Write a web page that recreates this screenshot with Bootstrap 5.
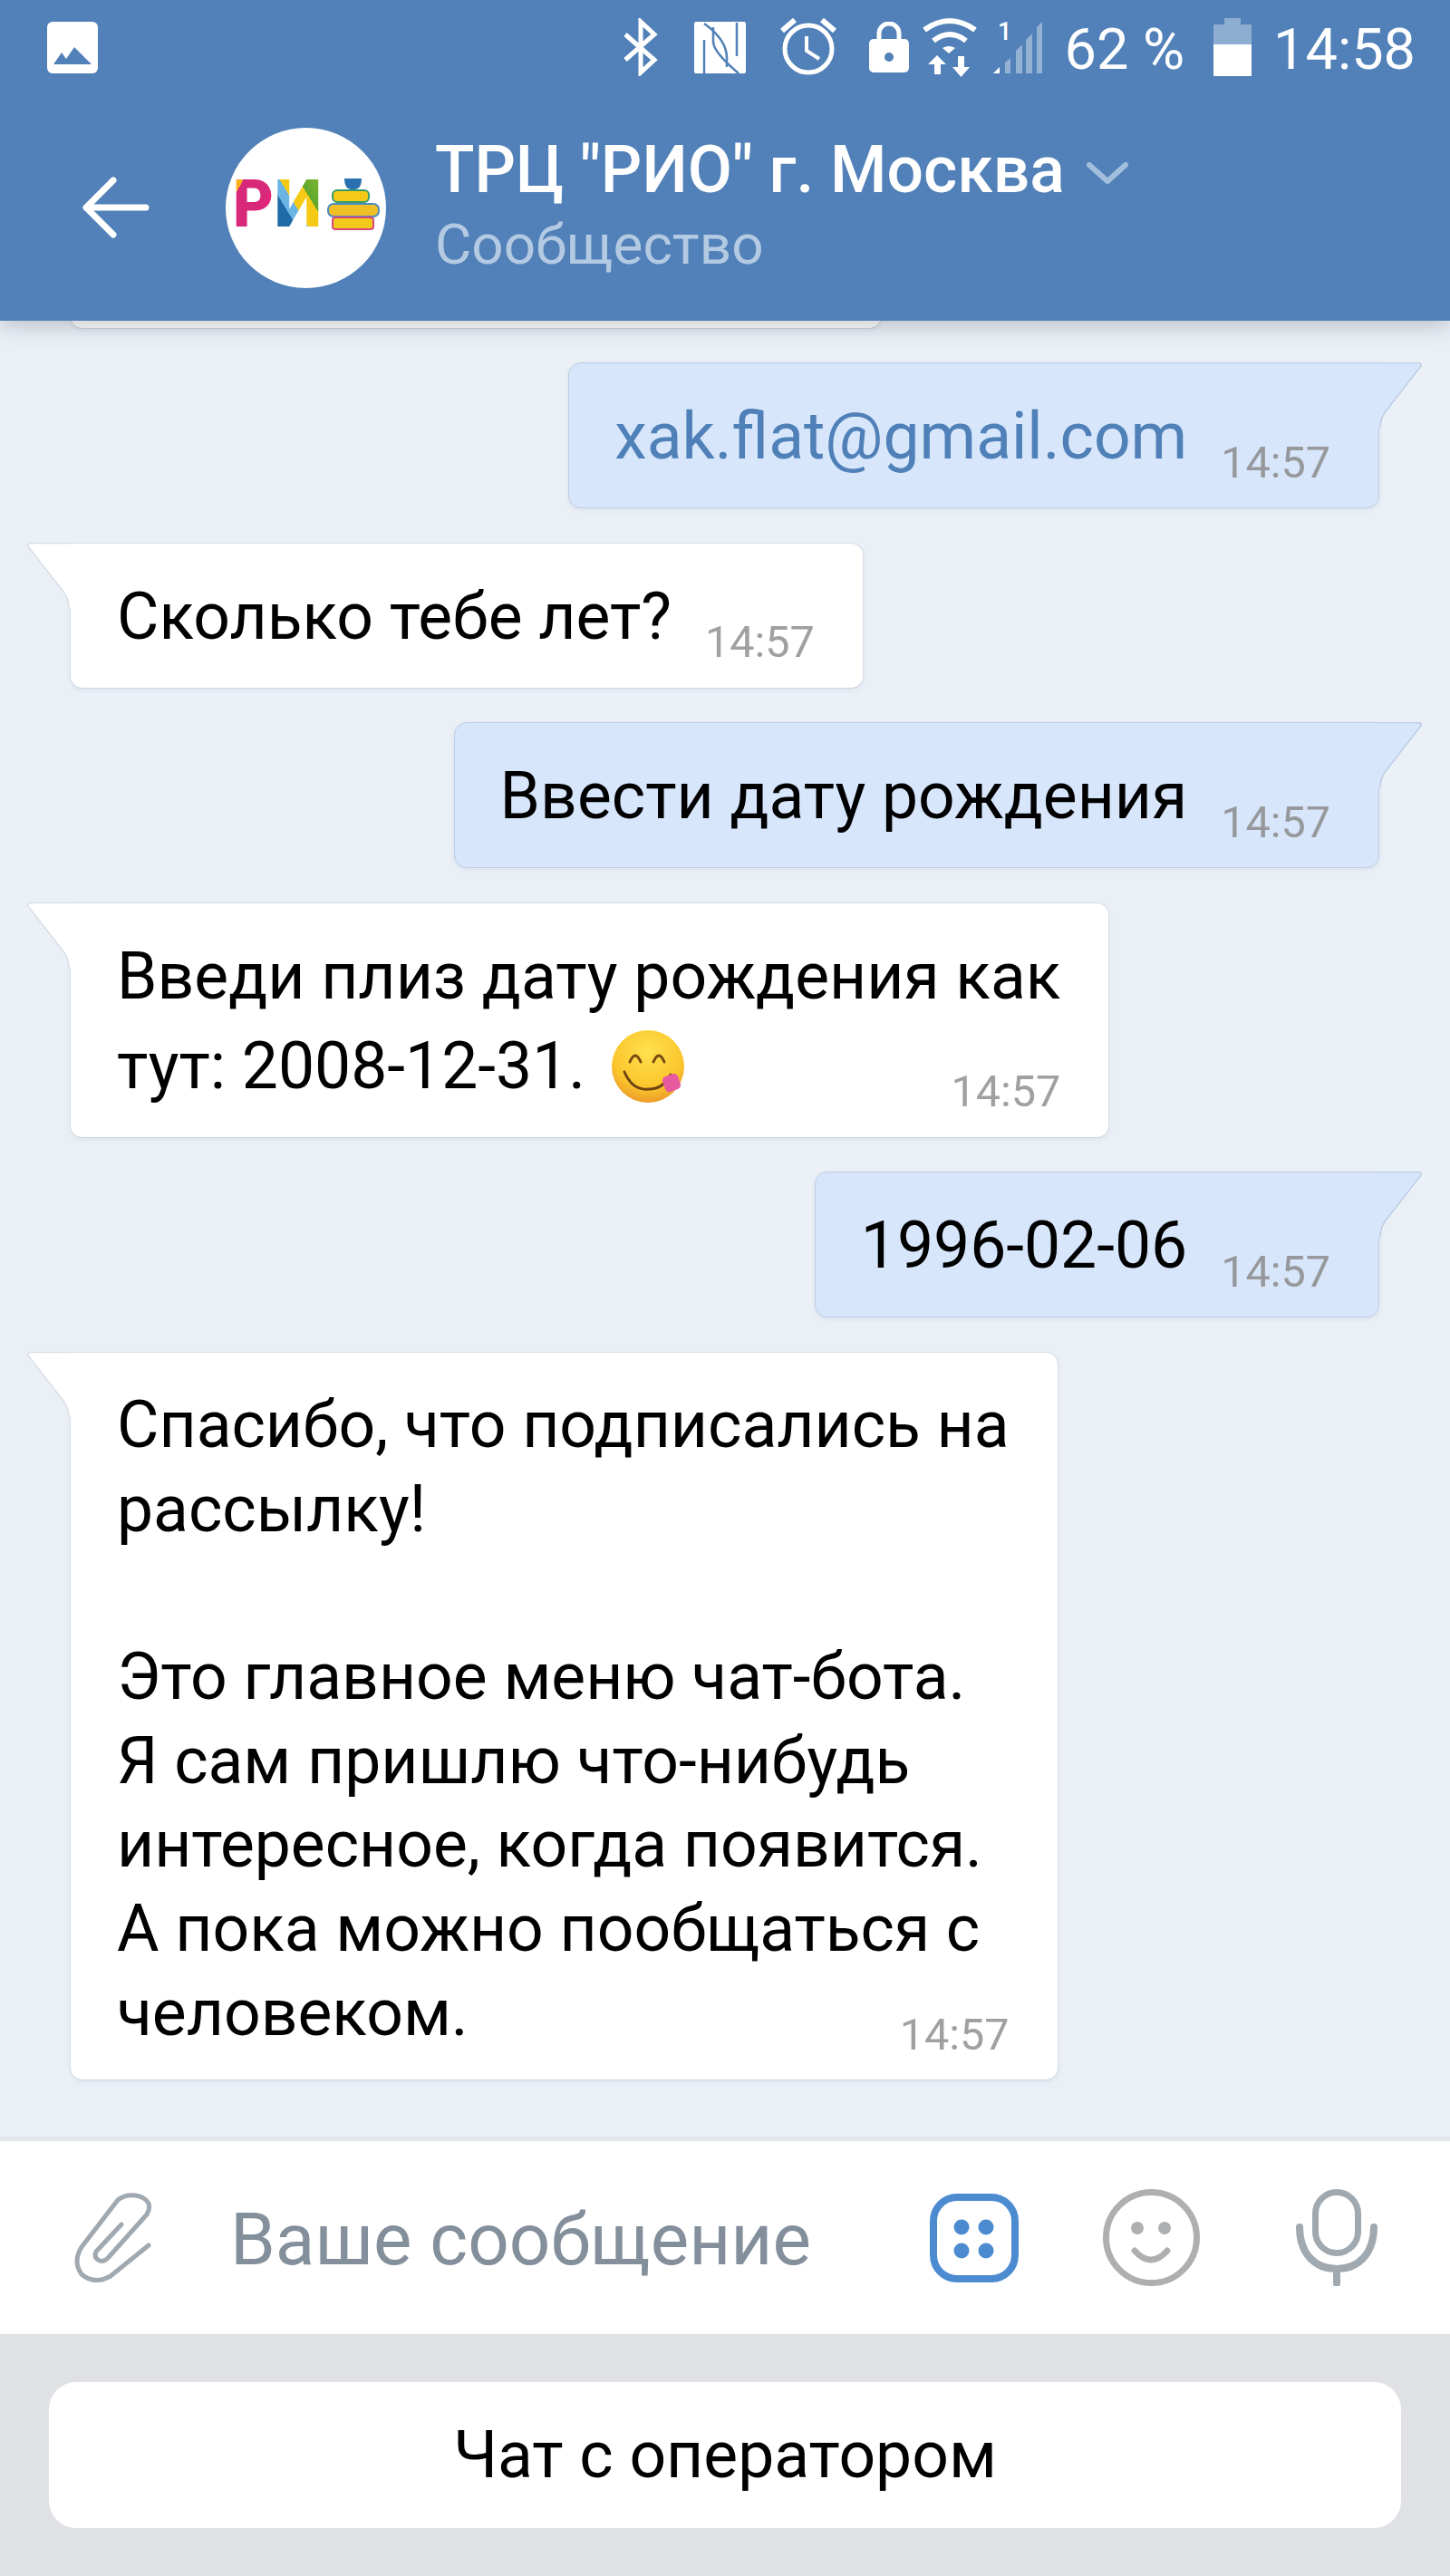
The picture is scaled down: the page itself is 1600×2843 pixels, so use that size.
<!DOCTYPE html>
<html lang="ru">
<head>
<meta charset="UTF-8">
<meta name="viewport" content="width=device-width, initial-scale=1.0">
<title>ТРЦ "РИО" г. Москва</title>
<link href="https://cdn.jsdelivr.net/npm/bootstrap@5.3.0/dist/css/bootstrap.min.css" rel="stylesheet">
<style>
  body {
    font-family: Roboto, "Liberation Sans", sans-serif;
    background: #ebf0f7;
    color: #000;
  }
  .screen { height: 100vh; }

  /* header */
  .vk-head {
    background: #5181b8;
    color: #fff;
    position: relative;
    z-index: 2;
    box-shadow: 0 4px 24px rgba(40, 50, 60, .28);
  }
  .status-row { height: 104px; padding: 0 38px 0 52px; font-size: 63px; line-height: 1; }
  .st-text { padding-top: 4px; }
  .st-bt { margin-right: 39px; }
  .st-nfc { margin-right: 38px; }
  .st-alarm { margin-right: 36px; }
  .st-lock { margin-right: 14px; }
  .st-wifi { margin-right: 16px; }
  .st-signal { margin-right: 24px; }
  .st-pct { margin-right: 32px; }
  .st-batt { margin-right: 24px; }
  .nav-row { height: 250px; padding-left: 90px; }
  .head-avatar { margin: 0 54px 0 84px; }
  .head-title { font-size: 71.4px; font-weight: 500; line-height: 80px; }
  .head-sub { font-size: 62px; line-height: 80px; padding-top: 2px; color: #b4cae3; }
  .head-chevron { margin-left: 24px; margin-top: 6px; }

  /* chat */
  .chat-area { padding: 0 78px 62px 77px; gap: 37.5px; }
  .bubble {
    position: relative;
    flex: none;
    font-size: 71.4px;
    line-height: 93px;
    padding: 34px 53px 32px 50px;
    border: 1px solid;
    border-radius: 14px;
    white-space: nowrap;
  }
  .bubble-in {
    background: #fff;
    border-color: #d9dfe6;
    border-bottom-color: #cfd6de;
    border-top-left-radius: 0;
    align-self: flex-start;
    padding-left: 51px;
    box-shadow: 0 2px 5px rgba(80, 100, 130, .08);
  }
  .bubble-out {
    background: #d7e6fb;
    border-color: #bccde3;
    border-top-right-radius: 0;
    align-self: flex-end;
    box-shadow: 0 2px 5px rgba(80, 100, 130, .1);
  }
  .bubble-cut { width: 896px; height: 120px; }
  .bubble-last { line-height: 92.7px; padding-bottom: 26.400px; }
  .tail { position: absolute; top: -1px; }
  .bubble-out .tail { left: 100%; fill: #d7e6fb; color: #bccde3; }
  .bubble-in .tail { right: 100%; fill: #fff; color: #d9dfe6; transform: scaleX(-1); }
  .msg-time {
    font-size: 48.5px;
    line-height: 48px;
    color: #a0a0a2;
    margin-left: 37px;
    margin-bottom: -6.5px;
  }
  .bubble-out .msg-time { color: #96989b; }
  .msg-time-under { display: block; text-align: right; margin-top: -41.5px; }
  .bubble-last .msg-time-under { margin-top: -47.100px; margin-bottom: -.9px; }
  .msg-link { color: #4f80b8; text-decoration: none; }
  .emoji { vertical-align: -17px; margin-left: 10px; margin-top: 12px; }

  /* input */
  .input-bar {
    height: 218px;
    background: #fff;
    border-top: 5px solid #e2e5e9;
    padding-left: 82px;
  }
  .msg-input {
    width: 650px;
    margin-left: 84px;
    margin-right: 122px;
    padding: 4px 0 0;
    border: 0;
    background: transparent;
    box-shadow: none;
    font-size: 80px;
    line-height: 90px;
    flex: none;
  }
  .msg-input::placeholder { color: #848f9c; opacity: 1; }
  .ic-smile { margin-left: 93px; }
  .ic-mic { margin-left: 106px; }

  /* keyboard */
  .bot-keys { height: 267px; background: #dfe1e5; padding: 53px 54px; }
  .bot-btn {
    background: #fff;
    border: 0;
    border-radius: 30px;
    font-size: 71.4px;
    line-height: 1;
    color: #000;
  }
</style>
</head>
<body>
<svg width="0" height="0" class="position-absolute">
  <symbol id="tail-shape" viewBox="0 0 48 72">
    <path d="M0 0H44Q48 0 47 4L8 54Q2 62 2 72H0Z" stroke="none"/>
    <path d="M0 .5H44Q48 .5 47 4L8 54Q2 62 2 72" fill="none" stroke="currentColor" stroke-width="1.5"/>
  </symbol>
</svg>

<div class="screen d-flex flex-column overflow-hidden">
  <!-- header -->
  <header class="vk-head flex-shrink-0">
    <div class="status-row d-flex align-items-center">
      <svg width="56" height="57" viewBox="0 0 56 57">
        <rect width="56" height="57" rx="6" fill="#fff"/>
        <path d="M7 47 16 34l5 7 9-13 19 19Z" fill="#5181b8"/>
      </svg>
      <span class="ms-auto"></span>
      <svg class="st-bt" width="40" height="64" viewBox="0 0 40 64">
        <path d="M3 18 35 46 20 60V4L35 18 3 46" fill="none" stroke="#fff" stroke-width="5"/>
      </svg>
      <svg class="st-nfc" width="57" height="57" viewBox="0 0 57 57">
        <rect width="57" height="57" rx="2" fill="#fff"/>
        <path d="M11 20V57M11 2C25 12 36 25 36 40V50M21 6V22C21 32 36 46 49 57M47 1V38" fill="none" stroke="#5181b8" stroke-width="2.500"/>
      </svg>
      <svg class="st-alarm" width="62" height="64" viewBox="0 0 62 64">
        <circle cx="31" cy="34" r="26" fill="none" stroke="#fff" stroke-width="5"/>
        <path d="M2 14 16 2M46 2 60 14" stroke="#fff" stroke-width="6"/>
        <path d="M29 20V36L43 45" fill="none" stroke="#fff" stroke-width="4"/>
      </svg>
      <svg class="st-lock" width="44" height="56" viewBox="0 0 44 56">
        <rect y="19" width="44" height="37" rx="5" fill="#fff"/>
        <path d="M11 20V13a11 11 0 0 1 22 0V20" fill="none" stroke="#fff" stroke-width="5"/>
        <circle cx="22" cy="39" r="5" fill="#5181b8"/>
      </svg>
      <svg class="st-wifi" width="62" height="66" viewBox="0 0 62 66" fill="#fff">
        <path d="M3 14Q31-6 59 14M13 26Q31 12 49 26" fill="none" stroke="#fff" stroke-width="6"/>
        <path d="M23 34Q30 30 37 34L30 40Z"/>
        <path d="M17 42 27 52H21V63H14V52H7Z"/>
        <path d="M40 43H47V55H53L43.500 66 34 55H40Z"/>
      </svg>
      <svg class="st-signal" width="56" height="70" viewBox="0 -6 56 70">
        <text x="6" y="21" font-size="27" font-weight="500" fill="#fff">1</text>
        <path d="M1 58 8 51V58Z" fill="#fff"/>
        <path d="M14 58V46L20 41V58ZM26 58V33L33 26V58ZM37 58V21L44 14V58ZM49 58V7L55 1V58Z" fill="#fff" fill-opacity=".38"/>
      </svg>
      <span class="st-pct st-text">62 %</span>
      <svg class="st-batt" width="42" height="64" viewBox="0 0 42 64">
        <path d="M12 0H30V7H42V29H0V7H12Z" fill="#fff" fill-opacity=".35"/>
        <rect y="29" width="42" height="35" fill="#fff"/>
      </svg>
      <span class="st-text">14:58</span>
    </div>
    <div class="nav-row d-flex align-items-center">
      <svg width="75" height="68" viewBox="0 0 75 68" class="flex-shrink-0">
        <path d="M71 34H5M35 4 5 34 35 64" fill="none" stroke="#fff" stroke-width="7" stroke-linecap="round" stroke-linejoin="round"/>
      </svg>
      <svg class="head-avatar flex-shrink-0" width="177" height="177" viewBox="0 0 177 177">
        <defs>
          <linearGradient id="letter-r" x1="0" y1="0" x2="1" y2="1">
            <stop offset=".22" stop-color="#f6b01e"/><stop offset=".22" stop-color="#d8287a"/>
            <stop offset=".6" stop-color="#d8287a"/><stop offset=".6" stop-color="#e0267c"/>
          </linearGradient>
          <linearGradient id="letter-i" x1="0" y1="1" x2="1" y2="0">
            <stop offset=".22" stop-color="#1f6aa8"/><stop offset=".34" stop-color="#1f6aa8"/>
            <stop offset=".34" stop-color="#6bb5e5"/><stop offset=".46" stop-color="#6bb5e5"/>
            <stop offset=".46" stop-color="#f6c915"/><stop offset=".66" stop-color="#f6c915"/>
            <stop offset=".66" stop-color="#5fa82e"/><stop offset="1" stop-color="#8fbb2c"/>
          </linearGradient>
        </defs>
        <circle cx="88.500" cy="88.500" r="88.500" fill="#fff"/>
        <text x="8" y="109" font-size="73" font-weight="900" fill="url(#letter-r)" textLength="45" lengthAdjust="spacingAndGlyphs">Р</text>
        <text x="54" y="109" font-size="73" font-weight="900" fill="url(#letter-i)" textLength="52" lengthAdjust="spacingAndGlyphs">И</text>
        <path d="M131 56H150Q150 67 143 68H138Q131 67 131 56Z" fill="#2a6fae"/>
        <rect x="118" y="69" width="40" height="13" rx="5" fill="#f5c918" stroke="#3a9a6a" stroke-width="2"/>
        <rect x="113" y="84" width="56" height="14" rx="6" fill="#f0be25" stroke="#4a8cc4" stroke-width="2"/>
        <rect x="118" y="99" width="45" height="13" rx="3" fill="#f5c918" stroke="#d8467e" stroke-width="2"/>
      </svg>
      <div>
        <div class="head-title d-flex align-items-center">ТРЦ "РИО" г. Москва
          <svg class="head-chevron" width="46" height="24" viewBox="0 0 46 24">
            <path d="M3 3 23 21 43 3" fill="none" stroke="#a3bfdd" stroke-width="6" stroke-linecap="round" stroke-linejoin="round"/>
          </svg>
        </div>
        <div class="head-sub">Сообщество</div>
      </div>
    </div>
  </header>

  <!-- messages -->
  <main class="chat-area flex-grow-1 d-flex flex-column justify-content-end overflow-hidden">
    <div class="bubble bubble-in bubble-cut"></div>

    <div class="bubble bubble-out d-flex align-items-end">
      <svg class="tail" width="48" height="72"><use href="#tail-shape"/></svg>
      <a class="msg-link" href="#">xak.flat@gmail.com</a>
      <span class="msg-time">14:57</span>
    </div>

    <div class="bubble bubble-in d-flex align-items-end">
      <svg class="tail" width="48" height="72"><use href="#tail-shape"/></svg>
      <span>Сколько тебе лет?</span>
      <span class="msg-time">14:57</span>
    </div>

    <div class="bubble bubble-out d-flex align-items-end">
      <svg class="tail" width="48" height="72"><use href="#tail-shape"/></svg>
      <span>Ввести дату рождения</span>
      <span class="msg-time">14:57</span>
    </div>

    <div class="bubble bubble-in">
      <svg class="tail" width="48" height="72"><use href="#tail-shape"/></svg>
      <div>Введи плиз дату рождения как<br>тут: 2008-12-31.
        <svg class="emoji" width="82" height="82" viewBox="0 0 82 82">
          <defs>
            <radialGradient id="face" cx=".5" cy=".3" r=".75">
              <stop offset="0" stop-color="#ffe14f"/><stop offset=".65" stop-color="#fbc62c"/><stop offset="1" stop-color="#e8932a"/>
            </radialGradient>
          </defs>
          <circle cx="41" cy="41" r="40" fill="url(#face)"/>
          <path d="M21 36Q27 22 33 36M47 36Q53 22 59 36" fill="none" stroke="#7a4a10" stroke-width="3" stroke-linecap="round"/>
          <path d="M15 47Q24 68 42 66 58 66 66 50" fill="none" stroke="#6e4510" stroke-width="3" stroke-linecap="round"/>
          <rect x="58" y="50" width="18" height="18" rx="5" fill="#e85aa0" transform="rotate(-20 67 59)"/>
        </svg>
      </div>
      <span class="msg-time msg-time-under">14:57</span>
    </div>

    <div class="bubble bubble-out d-flex align-items-end">
      <svg class="tail" width="48" height="72"><use href="#tail-shape"/></svg>
      <span>1996-02-06</span>
      <span class="msg-time">14:57</span>
    </div>

    <div class="bubble bubble-in bubble-last">
      <svg class="tail" width="48" height="72"><use href="#tail-shape"/></svg>
      <div>Спасибо, что подписались на<br>рассылку!<br><br>Это главное меню чат-бота.<br>Я сам пришлю что-нибудь<br>интересное, когда появится.<br>А пока можно пообщаться с<br>человеком.</div>
      <span class="msg-time msg-time-under">14:57</span>
    </div>
  </main>

  <!-- input -->
  <div class="input-bar flex-shrink-0 d-flex align-items-center">
    <svg width="88" height="100" viewBox="0 0 88 100" class="flex-shrink-0">
      <path d="M52 35 24 65Q21 72 28 75 33 77 38 71L80 24Q88 10 72 4 58 0 48 8L8 60Q-2 76 8 90 22 102 40 92L82 58" fill="none" stroke="#a0a8b0" stroke-width="5" stroke-linecap="round"/>
    </svg>
    <input class="form-control msg-input" type="text" placeholder="Ваше сообщение">
    <svg width="98" height="98" viewBox="0 0 98 98" class="flex-shrink-0">
      <rect x="4" y="4" width="90" height="90" rx="26" fill="none" stroke="#4d8bd0" stroke-width="8"/>
      <circle cx="35" cy="37" r="8.500" fill="#4d8bd0"/><circle cx="62" cy="37" r="8.500" fill="#4d8bd0"/>
      <circle cx="35" cy="63" r="8.500" fill="#4d8bd0"/><circle cx="62" cy="63" r="8.500" fill="#4d8bd0"/>
    </svg>
    <svg class="ic-smile flex-shrink-0" width="107" height="107" viewBox="0 0 107 107">
      <circle cx="53.500" cy="53.500" r="50" fill="none" stroke="#adafb1" stroke-width="7"/>
      <circle cx="38" cy="43" r="7" fill="#adafb1"/><circle cx="68" cy="43" r="7" fill="#adafb1"/>
      <path d="M35 68Q53 88 71 68" fill="none" stroke="#adafb1" stroke-width="7" stroke-linecap="round"/>
    </svg>
    <svg class="ic-mic flex-shrink-0" width="90" height="107" viewBox="0 0 90 107">
      <rect x="21.500" y="3.500" width="47" height="67" rx="23.500" fill="none" stroke="#a0a8b0" stroke-width="7"/>
      <path d="M4 42C4 70 20 88 45 88 70 88 86 70 86 42M45 88V104" fill="none" stroke="#a0a8b0" stroke-width="8" stroke-linecap="round"/>
    </svg>
  </div>

  <!-- bot keyboard -->
  <div class="bot-keys flex-shrink-0 d-flex">
    <button type="button" class="btn bot-btn w-100">Чат с оператором</button>
  </div>
</div>

<script src="https://cdn.jsdelivr.net/npm/bootstrap@5.3.0/dist/js/bootstrap.bundle.min.js"></script>
</body>
</html>
